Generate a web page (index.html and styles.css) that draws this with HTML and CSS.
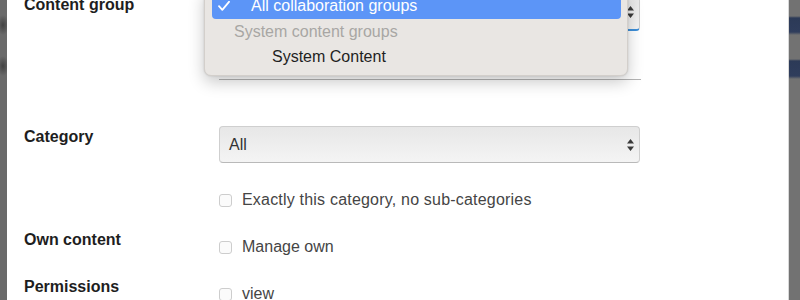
FILE: index.html
```html
<!DOCTYPE html>
<html>
<head>
<meta charset="utf-8">
<link rel="stylesheet" href="styles.css">
</head>
<body>
<div class="stripe-left"></div>
<main class="main">
  <form class="form">
    <div class="row">
      <div class="label">Content group</div>
      <div class="select select-focus">
        <span class="select-value"></span>
        <svg class="arrows" width="7" height="12" viewBox="0 0 7 12"><path d="M3.5 0 L7 4.5 L0 4.5 Z M0 7.5 L7 7.5 L3.5 12 Z" fill="#3a3a3a"/></svg>
      </div>
    </div>
    <div class="rule"></div>
    <div class="row row-category">
      <div class="label">Category</div>
      <div class="select">
        <span class="select-value">All</span>
        <svg class="arrows" width="7" height="12" viewBox="0 0 7 12"><path d="M3.5 0 L7 4.5 L0 4.5 Z M0 7.5 L7 7.5 L3.5 12 Z" fill="#3a3a3a"/></svg>
      </div>
    </div>
    <div class="row row-exact">
      <div class="label"></div>
      <label class="check"><span class="box"></span><span class="check-text wide">Exactly this category, no sub-categories</span></label>
    </div>
    <div class="row row-own">
      <div class="label">Own content</div>
      <label class="check check-offset"><span class="box"></span><span class="check-text">Manage own</span></label>
    </div>
    <div class="row row-perm">
      <div class="label">Permissions</div>
      <label class="check check-offset"><span class="box"></span><span class="check-text">view</span></label>
    </div>
  </form>
  <div class="menu">
    <div class="menu-item selected">
      <svg class="tick" width="12" height="10" viewBox="0 0 12 10"><path d="M1 5.2 L4.3 8.8 L11 0.8" fill="none" stroke="#fff" stroke-width="1.8" stroke-linecap="round" stroke-linejoin="round"/></svg>
      <span>All collaboration groups</span>
    </div>
    <div class="menu-item group">System content groups</div>
    <div class="menu-item child">System Content</div>
  </div>
</main>
<div class="stripe-right"></div>
</body>
</html>
```
FILE: styles.css
```css
html, body {
  margin: 0;
  padding: 0;
  height: 300px;
  overflow: hidden;
}
body {
  display: flex;
  width: 800px;
  font-family: "Liberation Sans", Arial, sans-serif;
  background: #fff;
}
.stripe-left {
  width: 7px;
  flex: none;
  background:
    radial-gradient(ellipse 6px 10px at 3px 25px, rgba(40,40,40,.6), transparent),
    radial-gradient(ellipse 6px 10px at 3px 66px, rgba(40,40,40,.6), transparent),
    #6a6a6a;
}
.stripe-right {
  width: 11px;
  flex: none;
  border-left: 1px solid #d8d8d8;
  background:
    linear-gradient(to bottom, transparent 16px, #2c3a57 18px, #2f3d5c 32px, transparent 35px),
    linear-gradient(to bottom, transparent 59px, #2c3a57 61px, #2f3d5c 76px, transparent 79px),
    #727272;
}
.main {
  flex: 1;
  position: relative;
  padding-left: 17px;
}
.form {
  margin-top: -6px;
}
.row {
  display: flex;
  align-items: flex-start;
}
.label {
  width: 195px;
  flex: none;
  font-weight: bold;
  font-size: 16px;
  line-height: 20px;
  color: #1e1e1e;
  padding-top: 1px;
}
.select {
  width: 421px;
  height: 37px;
  box-sizing: border-box;
  border: 1px solid #cfcfcf;
  border-bottom-color: #b9b9b9;
  border-radius: 4px;
  background: linear-gradient(to bottom, #e7e7e7, #f4f4f4);
  display: flex;
  align-items: center;
  justify-content: space-between;
  padding: 0 5px 0 9px;
  font-size: 16px;
  color: #333;
}
.select-focus {
  border-bottom: 2px solid #3d8fd9;
}
.arrows {
  display: block;
}
.rule {
  margin: 48px 0 0 195px;
  width: 422px;
  border-top: 1px solid #b4b4b4;
}
.row-category {
  margin-top: 46px;
}
.row-exact {
  margin-top: 27px;
}
.row-own {
  margin-top: 19px;
}
.row-perm {
  margin-top: 19px;
}
.check {
  display: flex;
  align-items: center;
  font-size: 16px;
  line-height: 20px;
  color: #454545;
}
.check-text.wide {
  letter-spacing: 0.2px;
}
.check-offset {
  padding-top: 8px;
}
.box {
  width: 11px;
  height: 11px;
  border: 1px solid #cdcdcd;
  border-radius: 3px;
  background: #fbfbfb;
  margin-right: 10px;
}
.menu {
  position: absolute;
  left: 197px;
  top: -12px;
  width: 424px;
  box-sizing: border-box;
  padding: 4px 6px 5px 7px;
  background: #e9e6e3;
  border: 1px solid #d3cfcb;
  border-radius: 7px;
  box-shadow: 0 6px 16px rgba(0,0,0,.22), 0 0 2px rgba(0,0,0,.15);
}
.menu-item {
  height: 25.5px;
  line-height: 25.5px;
  font-size: 16px;
  color: #1f1f1f;
  display: flex;
  align-items: center;
  white-space: nowrap;
}
.menu-item.selected {
  background: #5c95f7;
  color: #fff;
  border-radius: 4px;
  padding-left: 6px;
}
.tick {
  margin-right: 21px;
}
.menu-item.group {
  color: #a8a6a4;
  padding-left: 22px;
}
.menu-item.child {
  padding-left: 60px;
}
```
